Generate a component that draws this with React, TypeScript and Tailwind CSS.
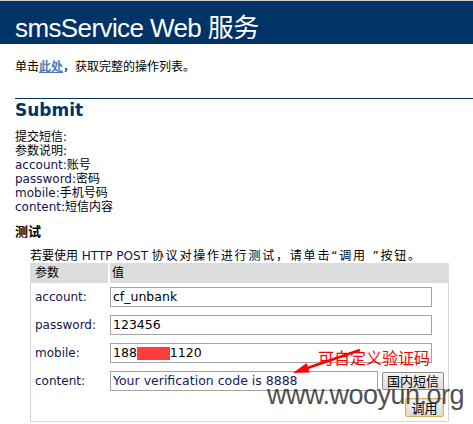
import React from "react";

const body = '"DejaVu Sans", "Noto Sans CJK SC", sans-serif';
const cjk = '"Noto Sans CJK SC", "DejaVu Sans", sans-serif';

function L({ children }: { children: React.ReactNode }) {
  return <span className="text-[#14144a]">{children}</span>;
}

function Btn({ children, focus, w }: { children: React.ReactNode; focus?: boolean; w: string }) {
  return (
    <div
      className={`${w} h-full flex items-center justify-center rounded-[2px] border bg-gradient-to-b from-[#f3f3f3] to-[#dcdcdc] text-[13px] leading-[14px] text-black ${
        focus ? "border-[#d9ad5f] shadow-[inset_0_0_0_1px_#f0d9a8]" : "border-[#8a8a8a]"
      }`}
      style={{ fontFamily: cjk }}
    >
      {children}
    </div>
  );
}

export default function App() {
  return (
    <div className="relative w-[473px] h-[424px] overflow-hidden bg-white text-black" style={{ fontFamily: body }}>
      <div className="h-[1px] bg-[#cfcfcf]" />
      <div className="h-[43px] bg-[#003366] pl-[15px] pt-[12px]">
        <div className="text-white text-[26px] leading-[30px] tracking-[-0.6px]" style={{ fontFamily: '"Liberation Sans", "Noto Sans CJK SC", sans-serif' }}>
          smsService Web 服务
        </div>
      </div>

      <div className="pl-[15px] mt-[16px] text-[12px] leading-[14px]">
        单击<a className="font-bold text-[#4a7ab5] underline">此处</a>，获取完整的操作列表。
      </div>

      <div className="ml-[15px] mt-[24px] h-[1px] bg-[#003366]" />

      <div className="pl-[15px] mt-[1px] text-[17px] leading-[20px] font-bold text-[#003366]">Submit</div>

      <div className="pl-[15px] mt-[10px] text-[12px] leading-[14px]">
        <div>提交短信:</div>
        <div>参数说明:</div>
        <div><L>account:</L>账号</div>
        <div><L>password:</L>密码</div>
        <div><L>mobile:</L>手机号码</div>
        <div><L>content:</L>短信内容</div>
      </div>

      <div className="pl-[15px] mt-[10px] text-[13px] leading-[16px] font-bold">测试</div>

      <div className="pl-[30px] mt-[10px] text-[12px] leading-[13px] whitespace-nowrap">
        若要使用 <L>HTTP POST</L> <span className="tracking-[1.8px]">协议对操作进行测试，请单击“调用 ”按钮。</span>
      </div>

      <div className="ml-[30px] w-[419px] border-l border-r border-b border-[#d4d4d4] text-[12px]">
        <div className="flex h-[20px] gap-[2px] -ml-[1px] -mr-[1px]">
          <div className="w-[78px] bg-[#dcdcdc] pl-[5px] flex items-center">参数</div>
          <div className="flex-1 bg-[#dcdcdc] pl-[2px] flex items-center">值</div>
        </div>

        <div className="flex flex-col gap-[8px] pt-[4px] pb-[4px]">
          <div className="flex items-center h-[20px]">
            <div className="w-[79px] pl-[4px]"><L>account:</L></div>
            <div className="w-[322px] h-[20px] border border-[#a3a3a3] pl-[2px] flex items-center text-[12.5px]">cf_unbank</div>
          </div>
          <div className="flex items-center h-[20px]">
            <div className="w-[79px] pl-[4px]"><L>password:</L></div>
            <div className="w-[322px] h-[20px] border border-[#a3a3a3] pl-[2px] flex items-center text-[12.5px]">123456</div>
          </div>
          <div className="flex items-center h-[20px]">
            <div className="w-[79px] pl-[4px]"><L>mobile:</L></div>
            <div className="w-[322px] h-[20px] border border-[#a3a3a3] pl-[2px] flex items-center text-[12.5px]">
              188<span className="inline-block w-[33px] h-[13px] bg-[#ff3d3d]" />1120
            </div>
          </div>
          <div className="flex items-center h-[20px]">
            <div className="w-[79px] pl-[4px]"><L>content:</L></div>
            <div className="w-[268px] h-[20px] border border-[#a3a3a3] pl-[2px] flex items-center text-[12.5px] text-[#14205a]">
              Your verification code is 8888
            </div>
            <div className="ml-[4px] h-[18px]">
              <Btn w="w-[62px]">国内短信</Btn>
            </div>
          </div>
          <div className="flex justify-end pr-[4px] -mt-[1px] h-[19px]">
            <Btn w="w-[39px]" focus>调用</Btn>
          </div>
        </div>
      </div>

      <div className="absolute left-[318px] top-[349px] text-[16px] leading-[16px] text-[#ff0000]" style={{ fontFamily: cjk }}>
        可自定义验证码
      </div>
      <svg className="absolute left-0 top-0" width="473" height="424" viewBox="0 0 473 424">
        <line x1="360" y1="350" x2="306" y2="368.5" stroke="#ff0000" strokeWidth="2.5" />
        <polygon points="293,373 309.6,372.6 306.6,363" fill="#ff0000" />
      </svg>
      <div
        className="absolute left-[267px] top-[380px] text-[27px] leading-[31px] tracking-[-0.5px] text-[#333333] opacity-85 whitespace-nowrap"
        style={{ fontFamily: '"Liberation Sans", sans-serif' }}
      >
        www.wooyun.org
      </div>
    </div>
  );
}
